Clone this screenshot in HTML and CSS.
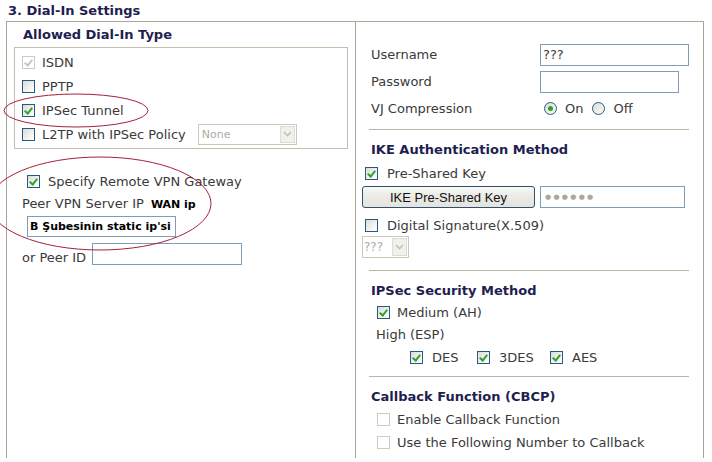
FILE: index.html
```html
<!DOCTYPE html>
<html>
<head>
<meta charset="utf-8">
<link rel="stylesheet" href="styles.css">
</head>
<body>
<div class="page">
  <div class="title">3. Dial-In Settings</div>
  <div class="table">
    <div class="cell left">
      <div class="head head-left">Allowed Dial-In Type</div>
      <div class="typebox">
        <div class="trow"><span class="cb dis checked"></span><span>ISDN</span></div>
        <div class="trow"><span class="cb"></span><span>PPTP</span></div>
        <div class="trow"><span class="cb checked"></span><span>IPSec Tunnel</span></div>
        <div class="trow"><span class="cb"></span><span>L2TP with IPSec Policy</span><span class="sel sel-none"><span class="sel-val">None</span><span class="sel-btn"><svg width="9" height="6" viewBox="0 0 9 6"><polyline points="1,1 4.5,4.5 8,1" fill="none" stroke="#c4c2b8" stroke-width="1.6"/></svg></span></span></div>
      </div>
      <div class="lrow gw"><span class="cb cb-wide checked"></span><span>Specify Remote VPN Gateway</span></div>
      <div class="lrow peer"><span>Peer VPN Server IP</span><b class="note">WAN ip</b></div>
      <input class="txt peer-ip" value="B Şubesinin static ip'si">
      <div class="lrow peerid"><span class="peerid-lbl">or Peer ID</span><input class="txt peer-id" value=""></div>
    </div>
    <div class="cell right">
      <div class="frow"><span class="flbl">Username</span><input class="txt user" value="???"></div>
      <div class="frow"><span class="flbl">Password</span><input class="txt pass" value=""></div>
      <div class="frow"><span class="flbl">VJ Compression</span><span class="rad on"></span><span class="rlbl">On</span><span class="rad off"></span><span class="rlbl">Off</span></div>
      <div class="sep sep1"></div>
      <div class="head head-right">IKE Authentication Method</div>
      <div class="rrow psk"><span class="cb cb-wide checked"></span><span>Pre-Shared Key</span></div>
      <div class="rrow btnrow"><button class="btn">IKE Pre-Shared Key</button><span class="txt keyval">●●●●●●</span></div>
      <div class="rrow dsig"><span class="cb cb-wide"></span><span>Digital Signature(X.509)</span></div>
      <div class="rrow selrow"><span class="sel sel-q"><span class="sel-val">???</span><span class="sel-btn"><svg width="9" height="6" viewBox="0 0 9 6"><polyline points="1,1 4.5,4.5 8,1" fill="none" stroke="#c4c2b8" stroke-width="1.6"/></svg></span></span></div>
      <div class="sep sep2"></div>
      <div class="head head-right">IPSec Security Method</div>
      <div class="rrow ind"><span class="cb checked"></span><span>Medium (AH)</span></div>
      <div class="rrow high">High (ESP)</div>
      <div class="rrow esp">
        <span class="opt opt-des"><span class="cb cb-wide checked"></span><span>DES</span></span>
        <span class="opt opt-3des"><span class="cb cb-wide checked"></span><span>3DES</span></span>
        <span class="opt"><span class="cb cb-wide checked"></span><span>AES</span></span>
      </div>
      <div class="sep sep3"></div>
      <div class="head head-right">Callback Function (CBCP)</div>
      <div class="rrow ind cbrow"><span class="cb dis"></span><span>Enable Callback Function</span></div>
      <div class="rrow ind cbrow"><span class="cb dis"></span><span>Use the Following Number to Callback</span></div>
    </div>
  </div>
  <svg class="annot" width="712" height="462" viewBox="0 0 712 462">
    <ellipse cx="76" cy="110.5" rx="72" ry="16.5" fill="none" stroke="#a3213a" stroke-width="1"/>
    <ellipse cx="100" cy="203.5" rx="111" ry="46.5" fill="none" stroke="#a3213a" stroke-width="1"/>
  </svg>
</div>
</body>
</html>
```
FILE: styles.css
```css
* { box-sizing: border-box; }

body {
  margin: 0;
  background: #fff;
  font-family: "DejaVu Sans", Verdana, sans-serif;
  font-size: 13px;
  color: #3a3a3a;
  overflow: hidden;
}

.page {
  position: relative;
  width: 712px;
  height: 462px;
}

.title {
  height: 21px;
  line-height: 21px;
  padding-left: 8px;
  font-weight: bold;
  color: #1e1e50;
}

.table {
  margin-left: 6px;
  width: 698px;
  height: 437px;
  border: 1px solid #a9a797;
  border-bottom: none;
  display: flex;
}

.cell { display: flex; flex-direction: column; }

.left {
  width: 349px;
  border-right: 1px solid #a9a797;
  padding-left: 7px;
}

.right {
  width: 347px;
  padding: 19px 14px 0 6px;
}

.head {
  font-weight: bold;
  color: #1e1e50;
  display: flex;
  align-items: center;
  height: 22px;
  padding-left: 9px;
}

.head-left { height: 25px; }

.head-right { margin-top: 8px; }

.typebox {
  width: 334px;
  border: 1px solid #c2bfae;
  padding: 2px 0 2px 7px;
}

.trow, .lrow, .rrow {
  display: flex;
  align-items: center;
  height: 24px;
}

.lrow, .rrow { height: 22px; }

.cb {
  position: relative;
  flex-shrink: 0;
  width: 13px;
  height: 13px;
  border: 1px solid #2a5a84;
  background: linear-gradient(135deg, #dcdcd6, #f6f6f4 70%, #fff);
  margin-right: 7px;
}

.cb-wide { margin-right: 9px; }

.cb.checked::after {
  content: "";
  position: absolute;
  left: 3px;
  top: 1px;
  width: 3px;
  height: 6px;
  border: solid #2aa42a;
  border-width: 0 2px 2px 0;
  transform: rotate(40deg);
}

.cb.dis {
  border-color: #cdcbbf;
  background: #fff;
}

.cb.dis.checked::after { border-color: #c8c6bb; }

.sel {
  display: inline-flex;
  align-items: stretch;
  height: 21px;
  border: 1px solid #cbc9bc;
  background: #fff;
}

.sel-none { width: 99px; margin-left: 12px; }

.sel-q { width: 47px; height: 22px; }

.sel-val {
  flex: 1;
  display: flex;
  align-items: center;
  padding-left: 3px;
  color: #aeac9f;
  font-size: 11px;
}

.sel-q .sel-val { font-size: 12px; padding-left: 1px; }

.sel-btn {
  width: 15px;
  margin: 1px;
  border: 1px solid #dedcd2;
  background: #f1f0ea;
  display: flex;
  align-items: center;
  justify-content: center;
}

.gw { margin-top: 21px; padding-left: 13px; }
.gw .cb { margin-right: 8px; }

.peer { padding-left: 8px; }

.note {
  font-size: 11px;
  color: #000;
  margin-left: 7px;
  padding-top: 3px;
}

.txt {
  border: 1px solid #7f9db9;
  background: #fff;
  font-family: "DejaVu Sans", Verdana, sans-serif;
  font-size: 13px;
  color: #3a3a3a;
  padding: 0 2px;
  margin: 0;
  outline: none;
}

.peer-ip {
  display: block;
  margin: 2px 0 0 13px;
  width: 149px;
  height: 21px;
  font-size: 11px;
  font-weight: bold;
  color: #000;
}

.peerid { margin-top: 6px; padding-left: 8px; }

.peerid-lbl { padding-top: 6px; }

.peer-id {
  margin-left: 6px;
  width: 150px;
  height: 22px;
}

.frow {
  display: flex;
  align-items: center;
  height: 27px;
}

.flbl {
  width: 178px;
  padding-left: 9px;
}

.user { width: 149px; height: 22px; }
.pass { width: 139px; height: 22px; }

.rad {
  position: relative;
  width: 13px;
  height: 13px;
  border-radius: 50%;
  border: 1px solid #2a5a84;
  background: linear-gradient(135deg, #dcdcd6, #fafaf8);
}

.rad.on { margin-left: 4px; }
.rad.off { margin-left: 9px; }

.rad.on::after {
  content: "";
  position: absolute;
  left: 3px;
  top: 3px;
  width: 5px;
  height: 5px;
  border-radius: 50%;
  background: #2aa42a;
}

.rlbl { margin-left: 8px; }

.sep {
  height: 1px;
  background: #b9b6a6;
  margin-left: 7px;
  width: 320px;
}

.sep1 { margin-top: 7px; }
.sep2 { margin-top: 12px; }
.sep3 { margin-top: 8px; }

.psk { margin-top: 2px; padding-left: 3px; }

.btnrow { margin-top: 2px; }

.btn {
  width: 173px;
  height: 22px;
  border: 1px solid #30506e;
  border-radius: 3px;
  background: linear-gradient(#fafaf8, #ecebe6 40%, #e4e3dd);
  font-family: "Liberation Sans", Arial, sans-serif;
  font-size: 13px;
  color: #111;
  padding: 0;
  margin: 0;
}

.keyval {
  display: flex;
  align-items: center;
  margin-left: 5px;
  width: 145px;
  height: 22px;
  padding-left: 4px;
  color: #a9a89c;
  font-size: 7px;
  letter-spacing: 2.3px;
}

.dsig { margin-top: 6px; padding-left: 3px; }

.selrow { height: 22px; }

.ind { padding-left: 15px; }
.high { padding-left: 14px; }

.esp { margin-top: 1px; padding-left: 48px; }

.opt { display: flex; align-items: center; }
.opt-des { width: 67px; }
.opt-3des { width: 73px; }

.cbrow { margin-top: 1px; }

.annot {
  position: absolute;
  left: 0;
  top: 0;
  pointer-events: none;
}
```
